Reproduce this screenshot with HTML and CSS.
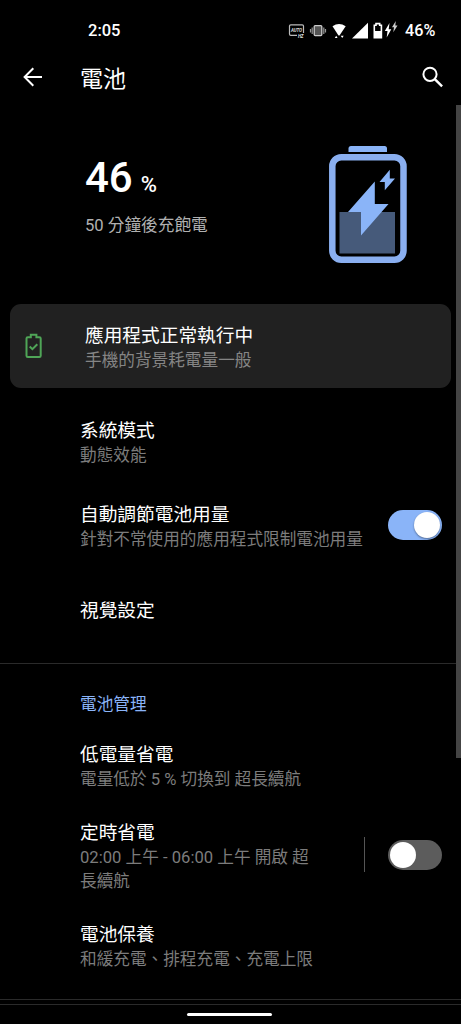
FILE: index.html
```html
<!DOCTYPE html>
<html lang="zh-Hant">
<head>
<meta charset="utf-8">
<title>電池</title>
<link rel="stylesheet" href="styles.css">
</head>
<body>
<div class="screen">
  <div class="status">
    <span class="clock">2:05</span>
    <svg class="status-icons" width="112" height="20" viewBox="0 0 112 20" fill="none">
      <rect x="1.500" y="3.800" width="14" height="10.500" rx="1.300" stroke="#bbb" stroke-width="1.200"/>
      <rect x="9" y="12" width="8" height="5" fill="#000"/>
      <text class="tiny" x="3" y="11" textLength="11">AUTO</text>
      <text class="tiny" x="10" y="17" textLength="5.500">HZ</text>
      <rect x="26.200" y="4.600" width="7.600" height="10" rx="1" fill="#555" stroke="#ccc" stroke-width="1.300"/>
      <path d="M24.200 6.500v6.500M35.800 6.500v6.500M22.500 8v3.500M37.500 8v3.500" stroke="#999" stroke-width="1.200"/>
      <path d="M44.500 5.200Q51 .7 57.700 5.200L51.500 14.500H50.500Z" fill="#fff"/>
      <path d="M46.800 17l1.400-2.300 1.400 2.300zM52.700 14.700h3l-1.500 2.300z" fill="#fff"/>
      <path d="M64 17.500L80 1.800V17.500Z" fill="#fff"/>
      <path d="M86.300 4.200h1.700V2.600h3.700v1.600h1.700v12.600h-7.100z" stroke="#fff" stroke-width="1.600"/>
      <path d="M86.500 10h6.800v6.500h-6.800z" fill="#fff"/>
      <path d="M101.500 2L96.800 10h2.700l-.8 6.500 4.600-8.200h-2.600z" fill="#fff"/>
      <path d="M107.800 0l-3.800 6.300h2l-.7 5 4.200-6.800h-2.200z" fill="#ccc"/>
    </svg>
    <span class="level">46%</span>
  </div>
  <header class="bar">
    <svg class="back" width="22" height="22" viewBox="0 0 22 22" fill="none" stroke="#fff" stroke-width="2"><path d="M20 11H3M11.300 2.300L2.600 11l8.700 8.700"/></svg>
    <h1>電池</h1>
    <svg width="24" height="24" viewBox="0 0 24 24" fill="none" stroke="#fff"><circle cx="9" cy="9.300" r="6.600" stroke-width="2"/><path d="M13.800 14.100l7.300 7.300" stroke-width="2.400"/></svg>
  </header>
  <section class="summary">
    <div class="summary-text">
      <div class="amount"><b>46</b><span>%</span></div>
      <p>50 分鐘後充飽電</p>
    </div>
    <svg width="80" height="120" viewBox="0 0 80 120" fill="#8ab4f8">
      <path d="M20.500 7V3.500q0-2.500 2.500-2.500h33.500q2.500 0 2.500 2.500V7z"/>
      <rect x="4.300" y="12.200" width="71.200" height="102.600" rx="9" fill="none" stroke="#8aaff0" stroke-width="6.500"/>
      <path d="M11.500 67H67v41.500H11.500z" fill="#465a7a"/>
      <path d="M46.800 36.500L20 67h13v23.500L60.500 59H46.800z"/>
      <path d="M61.800 24.800L51.500 37h5.300v8.200L67 33.500h-5.200z"/>
    </svg>
  </section>
  <section class="card">
    <svg class="ok" width="18" height="26" viewBox="0 0 18 26" fill="none" stroke="#4fa557" stroke-width="2"><path d="M2.800 4.200h3V1.700h5.600v2.500h3q1.300 0 1.300 1.300v17.300q0 1.300-1.300 1.300H2.800q-1.300 0-1.300-1.300V5.500q0-1.300 1.300-1.300zM4.700 13.500l2.700 2.700 4.900-5"/></svg>
    <div><h2>應用程式正常執行中</h2><p>手機的背景耗電量一般</p></div>
  </section>
  <section class="row mode"><div><h2>系統模式</h2><p>動態效能</p></div></section>
  <section class="row adaptive"><div><h2>自動調節電池用量</h2><p>針對不常使用的應用程式限制電池用量</p></div><span class="toggle on"></span></section>
  <section class="row visual"><h2>視覺設定</h2></section>
  <section class="row category"><h3>電池管理</h3></section>
  <section class="row low"><div><h2>低電量省電</h2><p>電量低於 5 % 切換到 超長續航</p></div></section>
  <section class="row timed"><div class="timed-text"><h2>定時省電</h2><p>02:00 上午 - 06:00 上午 開啟 超長續航</p></div><span class="separator"></span><span class="toggle"></span></section>
  <section class="row care"><div><h2>電池保養</h2><p>和緩充電、排程充電、充電上限</p></div></section>
  <footer class="nav"><span class="pill"></span></footer>
  <div class="scrollbar"></div>
</div>
</body>
</html>
```
FILE: styles.css
```css
* { box-sizing: border-box; margin: 0; padding: 0; }
body { background: #000; color: #fff; font-family: Roboto, "Noto Sans CJK TC", sans-serif; }
svg { display: block; flex: none; }
.screen { position: relative; width: 461px; height: 1024px; overflow: hidden; background: #000; }
.status { height: 50px; padding: 14px 0 0 88px; display: flex; font-size: 16.5px; font-weight: 500; line-height: 34px; }
.clock { width: 200px; }
.status-icons { margin-top: 7px; }
.level { margin-left: 5px; font-size: 16.2px; }
.tiny { fill: #ddd; font: italic bold 4.5px Roboto, sans-serif; }
.bar { height: 54px; display: flex; align-items: center; padding: 0 16px 0 22px; }
.back { margin-right: 36px; }
h1 { flex: 1; font-size: 23px; font-weight: 400; }
.summary { height: 200px; display: flex; justify-content: space-between; padding: 41px 53px 0 85px; }
.summary-text { padding-top: 8px; }
.amount { display: flex; align-items: baseline; gap: 8px; height: 61px; line-height: 50px; }
.amount b { font-size: 42px; font-weight: 500; }
.amount span { font-size: 22px; font-weight: 500; }
h2 { font-size: 18.7px; line-height: 24px; font-weight: 400; white-space: nowrap; }
p { font-size: 16.65px; line-height: 24px; color: #7c7c7c; padding-top: 1px; }
.summary p { color: #b0b0b0; padding-top: 0; }
.card { height: 84px; margin: 0 10px; padding: 20px 15px 0; display: flex; background: #212121; border-radius: 11px; }
.card p { color: #858585; }
.ok { margin: 9px 42px 0 0; }
.row { display: flex; padding: 31px 19px 0 80px; }
.mode { height: 84px; }
.adaptive { height: 96px; justify-content: space-between; }
.visual { height: 96px; border-bottom: 1px solid #2a2a2a; }
.row.category { height: 48px; padding-top: 29px; }
h3 { font-size: 16.65px; line-height: 24px; font-weight: 400; color: #8ab4f8; }
.low { height: 78px; }
.timed { height: 102px; }
.timed-text { width: 240px; }
.care { height: 108px; border-bottom: 1px solid #2a2a2a; }
.toggle { flex: none; display: flex; width: 54px; height: 30px; padding: 2px; border-radius: 15px; background: #5c5c5c; margin-top: 19px; }
.toggle::before { content: ""; width: 26px; height: 26px; border-radius: 50%; background: #fff; }
.toggle.on { background: #8ab4f8; justify-content: flex-end; margin-top: 7px; }
.toggle.on::before { box-shadow: 0 1px 2px #0006; }
.separator { width: 1px; height: 35px; margin: 16px 23px 0 44px; background: #555; }
.nav { margin-top: 4px; height: 20px; border-top: 1px solid #2a2a2a; display: flex; justify-content: center; padding-top: 8px; }
.pill { width: 85px; height: 3px; border-radius: 2px; background: #fff; margin-right: 2px; }
.scrollbar { position: absolute; right: 0; top: 105px; width: 5px; height: 653px; background: #444; }
```
